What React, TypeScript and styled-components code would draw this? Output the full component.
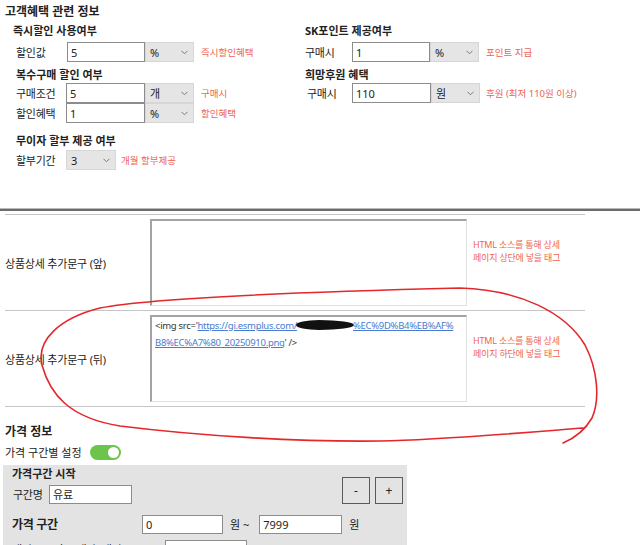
import React from "react";
import styled, { createGlobalStyle } from "styled-components";

const GlobalStyle = createGlobalStyle`
  html, body {
    margin: 0;
    padding: 0;
    background: #fff;
  }
  body {
    font-family: "Noto Sans", "Noto Sans CJK KR", sans-serif;
    color: #222;
    overflow: hidden;
  }
`;

const Page = styled.div`
  position: relative;
  width: 640px;
  height: 545px;
  overflow: hidden;
  padding-top: 4px;
  box-sizing: border-box;
`;

const Benefits = styled.section`
  height: 205px;
  padding-left: 5px;
  box-sizing: border-box;
`;

const SectionTitle = styled.div`
  font-size: 12px;
  font-weight: 700;
  line-height: 16px;
`;

const Columns = styled.div`
  display: grid;
  grid-template-columns: 300px 1fr;
  margin-top: 3px;
`;

const Column = styled.div`
  display: flex;
  flex-direction: column;
`;

const GroupHeading = styled.div<{ $indent?: number; $top?: number }>`
  font-size: 11px;
  font-weight: 700;
  line-height: 16px;
  padding-left: ${(p) => p.$indent ?? 0}px;
  margin-top: ${(p) => p.$top ?? 0}px;
`;

const FieldRow = styled.div<{ $top?: number; $pad?: number }>`
  display: flex;
  align-items: center;
  height: 20px;
  margin-top: ${(p) => p.$top ?? 0}px;
  padding-left: ${(p) => p.$pad ?? 0}px;
`;

const FieldLabel = styled.span<{ $width: number; $bold?: boolean; $size?: number }>`
  flex: none;
  width: ${(p) => p.$width}px;
  font-size: ${(p) => p.$size ?? 11}px;
  font-weight: ${(p) => (p.$bold ? 700 : 400)};
  letter-spacing: -0.3px;
  white-space: nowrap;
`;

const TextInput = styled.input<{ $width?: number; $height?: number }>`
  flex: none;
  width: ${(p) => p.$width ?? 78}px;
  height: ${(p) => p.$height ?? 20}px;
  box-sizing: border-box;
  margin: 0;
  padding: 0 3px;
  border: 1px solid #8c8c8c;
  background: #fff;
  font-family: "Noto Sans", "Noto Sans CJK KR", sans-serif;
  font-size: 11px;
  color: #222;
  outline: none;
`;

const SelectBox = styled.div<{ $width?: number }>`
  flex: none;
  display: flex;
  align-items: center;
  justify-content: space-between;
  width: ${(p) => p.$width ?? 49}px;
  height: 20px;
  box-sizing: border-box;
  padding: 0 5px 0 4px;
  background: #e5e5e5;
  border: 1px solid #d6d6d6;
  font-size: 11px;
`;

const Hint = styled.span<{ $gap?: number }>`
  margin-left: ${(p) => p.$gap ?? 7}px;
  font-size: 9.5px;
  color: #ef6352;
  white-space: nowrap;
`;

const Divider = styled.hr`
  margin: 0;
  border: none;
  height: 2px;
  background: #6b6b6b;
  box-shadow: 0 -1px 0 #b9b9b9;
`;

const DetailTable = styled.div`
  margin: 3px 0 0 5px;
  width: 580px;
`;

const DetailRow = styled.div<{ $last?: boolean }>`
  display: grid;
  grid-template-columns: 145px 317px 1fr;
  align-items: center;
  height: 95px;
  border-top: 1px solid #c6c6c6;
  border-bottom: ${(p) => (p.$last ? "1px solid #c6c6c6" : "none")};
`;

const DetailLabel = styled.span`
  font-size: 11px;
  letter-spacing: -0.2px;
`;

const TextArea = styled.div`
  height: 87px;
  box-sizing: border-box;
  padding: 1px 3px;
  border-top: 2px solid #a3a3a3;
  border-left: 2px solid #a3a3a3;
  border-right: 1px solid #e0e0e0;
  border-bottom: 1px solid #e0e0e0;
  font-size: 9.5px;
  letter-spacing: -0.3px;
  line-height: 16.5px;
  color: #333;
  white-space: nowrap;
  overflow: hidden;
`;

const CodeLink = styled.span`
  color: #4a7bd0;
  text-decoration: underline;
`;

const Redacted = styled.span`
  display: inline-block;
  width: 58px;
  height: 10px;
  margin: 0 -1px;
  vertical-align: -1px;
  background: #111;
  border-radius: 40% 60% 60% 40% / 50%;
`;

const DetailNote = styled.div`
  padding: 0 0 22px 6px;
  font-size: 9px;
  letter-spacing: -0.2px;
  line-height: 12.5px;
  color: #ef6352;
`;

const PriceSection = styled.section`
  padding-left: 5px;
  margin-top: 17px;
`;

const ToggleRow = styled.div`
  display: flex;
  align-items: center;
  gap: 8px;
  height: 16px;
  margin-top: 4px;
  font-size: 11px;
`;

const Switch = styled.span<{ $on: boolean }>`
  position: relative;
  width: 31px;
  height: 15px;
  border-radius: 8px;
  background: ${(p) => (p.$on ? "#6cc54a" : "#ccc")};

  &::after {
    content: "";
    position: absolute;
    top: 2px;
    left: ${(p) => (p.$on ? 18 : 2)}px;
    width: 11px;
    height: 11px;
    border-radius: 50%;
    background: #fff;
  }
`;

const PriceBox = styled.div`
  width: 404px;
  margin: 5px 0 0 -2px;
  padding: 2px 4px 24px 9px;
  box-sizing: border-box;
  background: #e3e3e3;
`;

const BoxHeader = styled.div`
  display: flex;
  justify-content: space-between;
  align-items: flex-end;
`;

const BoxTitle = styled.div`
  font-size: 11px;
  font-weight: 700;
  line-height: 14px;
`;

const ButtonGroup = styled.div`
  display: flex;
  gap: 5px;
`;

const StepButton = styled.button`
  width: 28px;
  height: 27px;
  margin: 0;
  padding: 0;
  border: 1px solid #5a5a5a;
  background: transparent;
  font-family: "Noto Sans", sans-serif;
  font-size: 12px;
  color: #222;
`;

const Unit = styled.span<{ $gap?: number; $after?: number }>`
  font-size: 11px;
  margin-left: ${(p) => p.$gap ?? 7}px;
  margin-right: ${(p) => p.$after ?? 0}px;
`;

const Annotation = styled.svg`
  position: absolute;
  top: 0;
  left: 0;
  pointer-events: none;
`;

const Chevron = () => (
  <svg width="7" height="5" viewBox="0 0 7 5">
    <path d="M0.5 0.8 L3.5 3.8 L6.5 0.8" fill="none" stroke="#7a7a7a" strokeWidth="1" />
  </svg>
);

const Select: React.FC<{ value: string; width?: number }> = ({ value, width }) => (
  <SelectBox $width={width}>
    <span>{value}</span>
    <Chevron />
  </SelectBox>
);

export default function App() {
  return (
    <Page>
      <GlobalStyle />
      <Benefits>
        <SectionTitle>고객혜택 관련 정보</SectionTitle>
        <Columns>
          <Column>
            <GroupHeading $indent={8}>즉시할인 사용여부</GroupHeading>
            <FieldRow $top={3} $pad={11}>
              <FieldLabel $width={51}>할인값</FieldLabel>
              <TextInput readOnly value="5" />
              <Select value="%" />
              <Hint>즉시할인혜택</Hint>
            </FieldRow>
            <GroupHeading $indent={11} $top={5}>복수구매 할인 여부</GroupHeading>
            <FieldRow $pad={11}>
              <FieldLabel $width={50}>구매조건</FieldLabel>
              <TextInput readOnly value="5" $width={79} />
              <Select value="개" />
              <Hint>구매시</Hint>
            </FieldRow>
            <FieldRow $pad={11}>
              <FieldLabel $width={50}>할인혜택</FieldLabel>
              <TextInput readOnly value="1" $width={79} />
              <Select value="%" />
              <Hint>할인혜택</Hint>
            </FieldRow>
            <GroupHeading $indent={11} $top={10}>무이자 할부 제공 여부</GroupHeading>
            <FieldRow $top={1} $pad={11}>
              <FieldLabel $width={50}>할부기간</FieldLabel>
              <Select value="3" width={50} />
              <Hint $gap={5}>개월 할부제공</Hint>
            </FieldRow>
          </Column>
          <Column>
            <GroupHeading>SK포인트 제공여부</GroupHeading>
            <FieldRow $top={3}>
              <FieldLabel $width={47}>구매시</FieldLabel>
              <TextInput readOnly value="1" />
              <Select value="%" />
              <Hint>포인트 지급</Hint>
            </FieldRow>
            <GroupHeading $top={5}>희망후원 혜택</GroupHeading>
            <FieldRow $pad={2}>
              <FieldLabel $width={45}>구매시</FieldLabel>
              <TextInput readOnly value="110" $width={79} />
              <Select value="원" />
              <Hint $gap={6}>후원 (최저 110원 이상)</Hint>
            </FieldRow>
          </Column>
        </Columns>
      </Benefits>

      <Divider />

      <DetailTable>
        <DetailRow>
          <DetailLabel>상품상세 추가문구 (앞)</DetailLabel>
          <TextArea />
          <DetailNote>
            HTML 소스를 통해 상세
            <br />
            페이지 상단에 넣을 태그
          </DetailNote>
        </DetailRow>
        <DetailRow $last>
          <DetailLabel>상품상세 추가문구 (뒤)</DetailLabel>
          <TextArea>
            &lt;img src='
            <CodeLink>
              https://gi.esmplus.com/
              <Redacted />
              %EC%9D%B4%EB%AF%
              <br />
              B8%EC%A7%80_20250910.png
            </CodeLink>
            ' /&gt;
          </TextArea>
          <DetailNote>
            HTML 소스를 통해 상세
            <br />
            페이지 하단에 넣을 태그
          </DetailNote>
        </DetailRow>
      </DetailTable>

      <PriceSection>
        <SectionTitle>가격 정보</SectionTitle>
        <ToggleRow>
          <span>가격 구간별 설정</span>
          <Switch $on />
        </ToggleRow>
        <PriceBox>
          <BoxHeader>
            <div>
              <BoxTitle>가격구간 시작</BoxTitle>
              <FieldRow $top={3} $pad={1}>
                <FieldLabel $width={36}>구간명</FieldLabel>
                <TextInput readOnly value="유료" $width={83} $height={19} />
              </FieldRow>
            </div>
            <ButtonGroup>
              <StepButton>-</StepButton>
              <StepButton>+</StepButton>
            </ButtonGroup>
          </BoxHeader>
          <FieldRow $top={10}>
            <FieldLabel $width={130} $bold $size={12}>가격 구간</FieldLabel>
            <TextInput readOnly value="0" $width={81} $height={19} />
            <Unit $after={10}>원 ~</Unit>
            <TextInput readOnly value="7999" $width={83} $height={19} />
            <Unit>원</Unit>
          </FieldRow>
          <FieldRow $top={5}>
            <FieldLabel $width={140}>매입 공급사(도매가) 대비</FieldLabel>
            <FieldLabel $width={13}>x</FieldLabel>
            <TextInput readOnly value="1.5" $width={82} $height={19} />
          </FieldRow>
        </PriceBox>
      </PriceSection>

      <Annotation width="640" height="545" viewBox="0 0 640 545">
        <path
          d="M583 428 C520 433 440 440 380 441 C300 442 200 436 120 426 C70 418 50 395 42 365 C36 340 60 318 100 308 C150 298 300 292 460 288 C520 290 565 312 585 345 C598 370 600 400 592 418 C585 430 575 438 563 443"
          fill="none"
          stroke="#e5262a"
          strokeWidth="1.6"
          strokeLinecap="round"
        />
      </Annotation>
    </Page>
  );
}
